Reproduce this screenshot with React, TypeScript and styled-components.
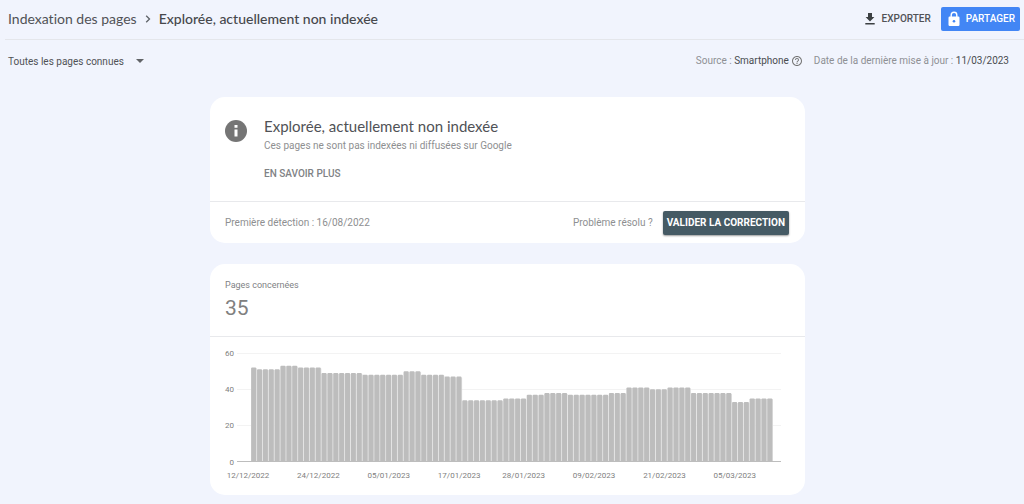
import React from "react";
import styled, { createGlobalStyle } from "styled-components";

const GlobalStyle = createGlobalStyle`
  *, *::before, *::after { box-sizing: border-box; }
  body {
    margin: 0;
    background: #f1f4fd;
    color: #505256;
    font-family: Roboto, "Liberation Sans", sans-serif;
    font-size: 10px;
  }
  h1, h2, p { margin: 0; font-weight: 400; }
  a { color: inherit; text-decoration: none; }
  button { font-family: inherit; cursor: pointer; }
`;

const headingFont = `Lato, "Open Sans", sans-serif`;

const Page = styled.div`
  padding-bottom: 8px;
`;

const Header = styled.header`
  display: flex;
  align-items: center;
  justify-content: space-between;
  height: 40px;
  margin-left: 5px;
  padding: 0 4px 2px 3px;
  border-bottom: 1px solid #e4e6eb;
`;

const Breadcrumb = styled.nav`
  display: flex;
  align-items: center;
  gap: 8px;
  font-family: ${headingFont};
  font-variant-ligatures: none;
  font-size: 14px;
  line-height: 20px;
`;

const Current = styled.h1`
  font-size: 14px;
  line-height: 20px;
  font-weight: 500;
  color: #46484c;
`;

const Actions = styled.div`
  display: flex;
  align-items: center;
  gap: 10px;
`;

const ActionButton = styled.button<{ $primary?: boolean }>`
  display: flex;
  align-items: center;
  gap: ${(p) => (p.$primary ? 5 : 7)}px;
  height: 24px;
  padding: ${(p) => (p.$primary ? "0 5px 0 6px" : "0")};
  border: 0;
  border-radius: 2px;
  background: ${(p) => (p.$primary ? "#4286f5" : "transparent")};
  color: ${(p) => (p.$primary ? "#fff" : "#505256")};
  font-size: 10px;
  font-weight: 500;
`;

const Toolbar = styled.div`
  display: flex;
  align-items: center;
  justify-content: space-between;
  height: 42px;
  padding: 0 15px 0 8px;
`;

const FilterButton = styled.button`
  display: flex;
  align-items: center;
  gap: 12px;
  padding: 0;
  border: 0;
  background: none;
  color: #505256;
  font-size: 10px;
`;

const Meta = styled.div`
  display: flex;
  align-items: center;
  gap: 11px;
  color: #8e9094;
  line-height: 12px;
`;

const MetaItem = styled.span`
  display: flex;
  align-items: center;
  gap: 2px;
`;

const Strong = styled.span`
  color: #4a4c50;
`;

const Main = styled.main`
  display: flex;
  flex-direction: column;
  align-items: center;
  gap: 21px;
  padding: 15px 9px 0 0;
`;

const Card = styled.section`
  width: 100%;
  max-width: 595px;
  border-radius: 15px;
  background: #fff;
  color: #8e8f91;
`;

const IssueBody = styled.div`
  display: flex;
  align-items: flex-start;
  gap: 17px;
  padding: 20px 15px 21px;
`;

const InfoMark = styled.svg`
  flex: none;
  margin-top: 3px;
`;

const IssueTitle = styled.h2`
  margin-bottom: 2px;
  font-family: ${headingFont};
  font-variant-ligatures: none;
  font-size: 15px;
  line-height: 18px;
  color: #505256;
`;

const IssueText = styled.p`
  line-height: 18px;
`;

const LearnMore = styled.a`
  display: block;
  margin-top: 12px;
  line-height: 13px;
  font-weight: 500;
  color: #808285;
`;

const IssueFooter = styled.div`
  display: flex;
  align-items: center;
  justify-content: space-between;
  height: 42px;
  padding: 0 16px 0 15px;
  border-top: 1px solid #e8e9ec;
`;

const Resolve = styled.div`
  display: flex;
  align-items: center;
  gap: 10px;
`;

const ValidateButton = styled.button`
  height: 24px;
  padding: 0 4px;
  border: 0;
  border-radius: 2px;
  background: #455a64;
  color: #fff;
  font-size: 10px;
  font-weight: 700;
  box-shadow: 0 1px 2px rgba(0, 0, 0, 0.4);
`;

const Metric = styled.div`
  height: 73px;
  padding: 14px 15px 0;
  border-bottom: 1px solid #e8e9ec;
`;

const MetricLabel = styled.p`
  font-size: 9px;
  line-height: 14px;
  color: #808285;
`;

const MetricValue = styled.p`
  margin-top: 2px;
  font-size: 21px;
  line-height: 28px;
  color: #808080;
`;

const Chart = styled.svg`
  display: block;
  width: 100%;
  height: auto;
  font-size: 8px;
  fill: #808080;
`;

/* [pages, number of consecutive days] */
const RUNS: [number, number][] = [
  [52, 1], [51, 4], [53, 3], [52, 4], [49, 7], [48, 7], [50, 3], [48, 4],
  [47, 3], [34, 7], [35, 4], [37, 3], [38, 4], [37, 7], [38, 3], [41, 4],
  [40, 3], [41, 4], [38, 7], [33, 3], [35, 4],
];
const DAYS = RUNS.flatMap(([value, count]) => Array<number>(count).fill(value));

const DATES: [string, number][] = [
  ["12/12/2022", 0], ["24/12/2022", 12], ["05/01/2023", 24], ["17/01/2023", 36],
  ["28/01/2023", 47], ["09/02/2023", 59], ["21/02/2023", 71], ["05/03/2023", 83],
];

const BASE = 125;
const PLOT_HEIGHT = 109;
const PLOT_LEFT = 41;
const STEP = 522 / DAYS.length;
const yOf = (value: number) => BASE - (value / 60) * PLOT_HEIGHT;

function PagesChart() {
  return (
    <Chart viewBox="0 0 595 158" role="img" aria-label="Pages concernées par jour">
      {[60, 40, 20].map((v) => (
        <rect key={v} x="27" y={Math.floor(yOf(v))} width="544" height="1" fill="#f3f3f3" />
      ))}
      {[60, 40, 20, 0].map((v) => (
        <text key={v} x="24" y={Math.floor(yOf(v)) + 3} textAnchor="end">{v}</text>
      ))}
      {DAYS.map((v, i) => {
        const x = PLOT_LEFT + i * STEP;
        const y = yOf(v);
        return (
          <g key={i}>
            <rect x={x} y={y + 1} width={STEP} height={BASE - y - 1} fill="#e2e2e2" />
            <rect x={x + 0.2} y={y} width={STEP - 0.9} height={BASE - y} rx="0.8" fill="#bdbdbd" />
          </g>
        );
      })}
      <rect x="27" y={BASE - 1} width="544" height="1" fill="#bdbdbd" />
      {DATES.map(([label, day]) => (
        <text key={label} x={38 + day * STEP} y="141" textAnchor="middle">{label}</text>
      ))}
    </Chart>
  );
}

export default function App() {
  return (
    <Page>
      <GlobalStyle />
      <Header>
        <Breadcrumb aria-label="Fil d’Ariane">
          <a href="#indexation">Indexation des pages</a>
          <svg width="6" height="8" viewBox="0 0 6 8" fill="none" stroke="#5f6368" strokeWidth="1.3" aria-hidden="true">
            <path d="M1.2 0.8 4.5 4 1.2 7.2" />
          </svg>
          <Current>Explorée, actuellement non indexée</Current>
        </Breadcrumb>
        <Actions>
          <ActionButton type="button">
            <svg width="10" height="12" viewBox="0 0 10 12" fill="#3c4043" aria-hidden="true">
              <path d="M3 0h4v4H9.400L5 8.400.600 4H3zM.300 10h9.400v1.400H.300z" />
            </svg>
            EXPORTER
          </ActionButton>
          <ActionButton type="button" $primary>
            <svg width="14" height="16" viewBox="0 0 14 16" aria-hidden="true">
              <path d="M4.200 6.500V4a2.800 2.800 0 0 1 5.600 0v2.500" fill="none" stroke="#fff" strokeWidth="1.4" />
              <rect x="1.500" y="5.500" width="11" height="9.500" rx="1.200" fill="#fff" />
              <circle cx="7" cy="10.200" r="1.300" fill="#4286f5" />
            </svg>
            PARTAGER
          </ActionButton>
        </Actions>
      </Header>
      <Toolbar>
        <FilterButton type="button">
          Toutes les pages connues
          <svg width="8" height="4" viewBox="0 0 8 4" fill="#616367" aria-hidden="true">
            <path d="M0 0h8L4 4z" />
          </svg>
        </FilterButton>
        <Meta>
          <MetaItem>
            <span>Source : <Strong>Smartphone</Strong></span>
            <svg width="12" height="12" viewBox="0 0 24 24" fill="#757575" aria-hidden="true">
              <path d="M11 18h2v-2h-2zm1-16C6.5 2 2 6.500 2 12s4.500 10 10 10 10-4.500 10-10S17.500 2 12 2m0 18c-4.400 0-8-3.600-8-8s3.600-8 8-8 8 3.600 8 8-3.600 8-8 8m0-14a4 4 0 0 0-4 4h2c0-1.100.900-2 2-2s2 .900 2 2c0 2-3 1.750-3 5h2c0-2.250 3-2.500 3-5a4 4 0 0 0-4-4" />
            </svg>
          </MetaItem>
          <span>Date de la dernière mise à jour : <Strong>11/03/2023</Strong></span>
        </Meta>
      </Toolbar>
      <Main>
        <Card>
          <IssueBody>
            <InfoMark width="22" height="22" viewBox="0 0 22 22" aria-hidden="true">
              <circle cx="11" cy="11" r="11" fill="#757575" />
              <path d="M9.500 9.500h3v7h-3zM9.500 5h3v2.800h-3z" fill="#fff" />
            </InfoMark>
            <div>
              <IssueTitle>Explorée, actuellement non indexée</IssueTitle>
              <IssueText>Ces pages ne sont pas indexées ni diffusées sur Google</IssueText>
              <LearnMore href="#en-savoir-plus">EN SAVOIR PLUS</LearnMore>
            </div>
          </IssueBody>
          <IssueFooter>
            <span>Première détection : 16/08/2022</span>
            <Resolve>
              <span>Problème résolu ?</span>
              <ValidateButton type="button">VALIDER LA CORRECTION</ValidateButton>
            </Resolve>
          </IssueFooter>
        </Card>
        <Card>
          <Metric>
            <MetricLabel>Pages concernées</MetricLabel>
            <MetricValue>35</MetricValue>
          </Metric>
          <PagesChart />
        </Card>
      </Main>
    </Page>
  );
}
